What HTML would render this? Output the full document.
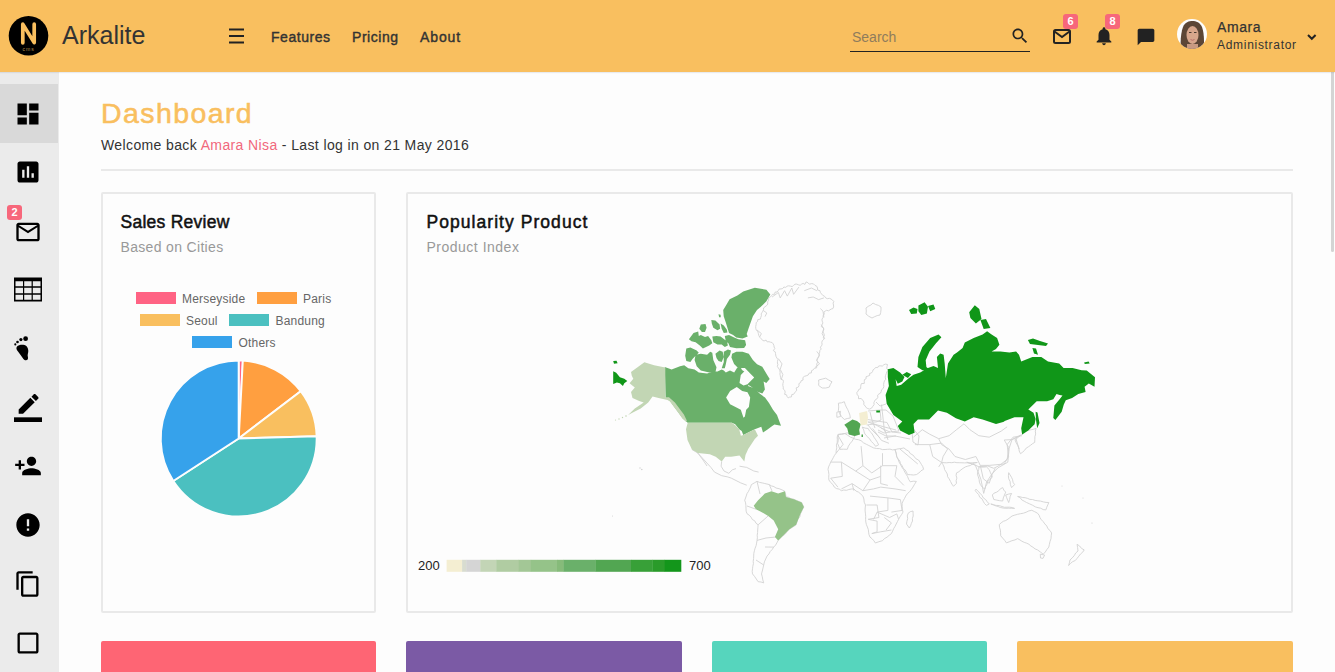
<!DOCTYPE html>
<html><head><meta charset="utf-8">
<style>
*{margin:0;padding:0;box-sizing:border-box}
html,body{width:1335px;height:672px;overflow:hidden;background:#fdfdfd;font-family:"Liberation Sans",sans-serif;color:#333}
.abs{position:absolute}
#hdr{position:absolute;left:0;top:0;width:1335px;height:72px;background:#f9bf5f;box-shadow:0 1px 1px rgba(60,80,110,0.10);z-index:2}
#side{position:absolute;left:0;top:72px;width:59px;height:600px;background:#ebebeb}
.t{position:absolute;white-space:nowrap;line-height:1}
.card{position:absolute;border:2px solid #e9e9e9;background:#fdfdfd;border-radius:2px}
.badge{position:absolute;width:15px;height:15px;background:#f7677b;color:#fff;font-weight:bold;font-size:11px;line-height:15px;text-align:center;border-radius:3px}
.ic{position:absolute;width:28px;height:28px}
.lg{position:absolute;font-size:12px;color:#666;line-height:1;white-space:nowrap;letter-spacing:0.2px}
.lb{position:absolute;width:40px;height:12px}
.sb{-webkit-text-stroke:0.4px currentColor;letter-spacing:0.55px}
</style></head><body>
<div id="hdr">
  <svg class="abs" style="left:0;top:0" width="60" height="72">
    <circle cx="28.5" cy="35.8" r="19.8" fill="#000"/>
    <path d="M22.8 42.8V24.2L34.2 42.6V24.2" fill="none" stroke="#f9bf5f" stroke-width="3.7" stroke-linecap="round" stroke-linejoin="round"/>
    <text x="28.6" y="50.6" font-size="5.2" fill="#b08a4a" text-anchor="middle" font-family="Liberation Sans" letter-spacing="0.9">cms</text>
  </svg>
  <div class="t" style="left:62px;top:23px;font-size:25px;color:#333">Arkalite</div>
  <svg class="abs" style="left:229px;top:28px" width="16" height="16"><rect x="0" y="0.5" width="15" height="2" fill="#222"/><rect x="0" y="7" width="15" height="2" fill="#222"/><rect x="0" y="13.5" width="15" height="2" fill="#222"/></svg>
  <div class="t sb" style="left:271px;top:30px;font-size:14px;color:#333">Features</div>
  <div class="t sb" style="left:352px;top:30px;font-size:14px;color:#333">Pricing</div>
  <div class="t sb" style="left:420px;top:30px;font-size:14px;color:#333;letter-spacing:0.9px">About</div>

  <div class="t" style="left:852px;top:30px;font-size:14px;color:#8f7c5c">Search</div>
  <div class="abs" style="left:850px;top:50.5px;width:180px;height:1.5px;background:#222"></div>
  <svg class="abs" style="left:1009.5px;top:26px" width="20" height="20" viewBox="0 0 24 24"><path fill="#222" d="M15.5 14h-.79l-.28-.27C15.41 12.59 16 11.11 16 9.5 16 5.91 13.090 3 9.5 3S3 5.91 3 9.5 5.91 16 9.5 16c1.61 0 3.09-.59 4.23-1.57l.27.28v.79l5 4.99L20.49 19l-4.99-5zm-6 0C7.01 14 5 11.990 5 9.5S7.01 5 9.5 5 14 7.01 14 9.5 11.99 14 9.5 14z"/></svg>

  <svg class="abs" style="left:1050px;top:26px" width="24" height="20"><rect x="4" y="4" width="16" height="13" rx="1.5" fill="none" stroke="#222" stroke-width="2"/><path d="M4.5 5.5L12 11L19.5 5.5" fill="none" stroke="#222" stroke-width="2"/></svg>
  <div class="badge" style="left:1063px;top:14px">6</div>

  <svg class="abs" style="left:1093px;top:25px" width="22" height="22" viewBox="0 0 24 24"><path fill="#222" d="M12 22c1.1 0 2-.9 2-2h-4c0 1.1.89 2 2 2zm6-6v-5c0-3.07-1.64-5.64-4.5-6.32V4c0-.83-.67-1.5-1.5-1.5s-1.5.67-1.5 1.5v.68C7.63 5.36 6 7.92 6 11v5l-2 2v1h16v-1l-2-2z"/></svg>
  <div class="badge" style="left:1105px;top:14px">8</div>

  <svg class="abs" style="left:1136px;top:26.5px" width="20" height="20" viewBox="0 0 24 24"><path fill="#222" d="M20 2H4c-1.1 0-2 .9-2 2v18l4-4h14c1.1 0 2-.9 2-2V4c0-1.1-.9-2-2-2z"/></svg>

  <svg class="abs" style="left:1176px;top:17.8px" width="32" height="32">
    <circle cx="16" cy="16" r="15" fill="#fdfdfd"/>
    <clipPath id="av"><circle cx="16" cy="16" r="15"/></clipPath>
    <g clip-path="url(#av)">
      <path d="M5 32C4 24 5 14 7 9C9 4 13 3 16.5 3C20 3 24 4.5 26 9C28 14 28.5 24 27.5 32Z" fill="#5c4636"/>
      <rect x="11" y="26" width="11" height="7" fill="#c89a82"/>
      <ellipse cx="16.5" cy="17" rx="6" ry="9" fill="#d7a68c"/>
      <path d="M13 14.5h2.5M18 14.5h2.5" stroke="#4a3a30" stroke-width="1.1"/>
      <path d="M14.5 21.5Q16.5 23 18.5 21.5" stroke="#b8706a" stroke-width="1" fill="none"/>
    </g>
  </svg>
  <div class="t" style="left:1217px;top:20px;font-size:14px;color:#333;-webkit-text-stroke:0.25px #333;letter-spacing:0.6px">Amara</div>
  <div class="t" style="left:1217px;top:38.5px;font-size:12px;color:#333;letter-spacing:0.7px">Administrator</div>
  <svg class="abs" style="left:1306px;top:33px" width="12" height="9"><path d="M2 2L5.8 5.8L9.6 2" fill="none" stroke="#222" stroke-width="2"/></svg>
</div>

<div id="side">
  <div class="abs" style="left:0;top:12px;width:58px;height:59px;background:#d9d9d9"></div>
</div>
<!-- sidebar icons (page coords) -->
<svg class="ic" style="left:14px;top:99.6px" viewBox="0 0 24 24"><path d="M3 13h8V3H3v10zm0 8h8v-6H3v6zm10 0h8V11h-8v10zm0-18v6h8V3h-8z"/></svg>
<svg class="ic" style="left:14px;top:157.7px" viewBox="0 0 24 24"><path d="M19 3H5c-1.1 0-2 .9-2 2v14c0 1.1.9 2 2 2h14c1.1 0 2-.9 2-2V5c0-1.1-.9-2-2-2zM9 17H7v-7h2v7zm4 0h-2V7h2v10zm4 0h-2v-4h2v4z"/></svg>
<svg class="ic" style="left:14px;top:217.5px" viewBox="0 0 24 24"><path d="M20 4H4c-1.1 0-1.99.9-1.99 2L2 18c0 1.1.9 2 2 2h16c1.1 0 2-.9 2-2V6c0-1.1-.9-2-2-2zm0 14H4V8l8 5 8-5v10zm-8-7L4 6h16l-8 5z" fill="none"/><path d="M20 4H4c-1.1 0-2 .9-2 2v12c0 1.1.9 2 2 2h16c1.1 0 2-.9 2-2V6c0-1.1-.9-2-2-2zm0 14H4V8l8 5 8-5v10zm0-12l-8 5-8-5z"/></svg>
<div class="badge" style="left:7px;top:205px">2</div>
<svg class="abs" style="left:14px;top:277px" width="28" height="25"><path fill="#000" fill-rule="evenodd" d="M0 0.5H28V24.5H0ZM1.5 4.2V9.3H9V4.2ZM10.2 4.2V9.3H17.6V4.2ZM18.8 4.2V9.3H26.5V4.2ZM1.5 10.8V16.2H9V10.8ZM10.2 10.8V16.2H17.6V10.8ZM18.8 10.8V16.2H26.5V10.8ZM1.5 17.7V22.7H9V17.7ZM10.2 17.7V22.7H17.6V17.7ZM18.8 17.7V22.7H26.5V17.7Z"/></svg>
<svg class="abs" style="left:10px;top:334px" width="24" height="30">
  <circle cx="15.6" cy="4.7" r="2.4"/><circle cx="10.9" cy="5.6" r="1.6"/><circle cx="7.5" cy="8" r="1.3"/><circle cx="5.3" cy="10.4" r="1.05"/>
  <path d="M7 12.5C9 10.5 14 10 16.6 12.2C18.5 14 18.7 17.5 17.8 20C17.2 22 18.6 23.6 17.8 25.3C17 26.8 14.6 26.7 13.4 25C11.6 22.5 10 20 8 17.6C6.6 16 5.8 14 7 12.5Z"/>
</svg>
<svg class="ic" style="left:13.7px;top:394px" viewBox="0 0 24 24"><path d="M17.75 7L14 3.25l-10 10V17h3.75l10-10zm2.96-2.96c.39-.39.39-1.02 0-1.41L18.37.29c-.39-.39-1.02-.39-1.41 0L15 2.25 18.75 6l1.96-1.96z"/><path d="M0 20h24v4H0z"/></svg>
<svg class="ic" style="left:13.5px;top:452px" viewBox="0 0 24 24"><path d="M15 12c2.21 0 4-1.79 4-4s-1.79-4-4-4-4 1.79-4 4 1.79 4 4 4zm-9-2V7H4v3H1v2h3v3h2v-3h3v-2H6zm9 4c-2.67 0-8 1.340-8 4v2h16v-2c0-2.66-5.33-4-8-4z"/></svg>
<svg class="ic" style="left:14px;top:511px" viewBox="0 0 24 24"><path d="M12 2C6.48 2 2 6.48 2 12s4.48 10 10 10 10-4.48 10-10S17.52 2 12 2zm1 15h-2v-2h2v2zm0-4h-2V7h2v6z"/></svg>
<svg class="ic" style="left:13.7px;top:570px" viewBox="0 0 24 24"><path d="M16 1H4c-1.1 0-2 .9-2 2v14h2V3h12V1zm3 4H8c-1.1 0-2 .9-2 2v14c0 1.1.9 2 2 2h11c1.1 0 2-.9 2-2V7c0-1.1-.9-2-2-2zm0 16H8V7h11v14z"/></svg>
<svg class="ic" style="left:13.8px;top:629.3px" viewBox="0 0 24 24"><path d="M19 5v14H5V5h14m0-2H5c-1.1 0-2 .9-2 2v14c0 1.1.9 2 2 2h14c1.1 0 2-.9 2-2V5c0-1.1-.9-2-2-2z"/></svg>

<div class="t" style="left:101px;top:99px;font-size:28.5px;color:#f9bf5f;-webkit-text-stroke:0.55px #f9bf5f;letter-spacing:1.4px">Dashboard</div>
<div class="t" style="left:101px;top:138px;font-size:14px;color:#333;letter-spacing:0.38px">Welcome back <span style="color:#f1687c">Amara Nisa</span> - Last log in on 21 May 2016</div>
<div class="abs" style="left:101px;top:169px;width:1192px;height:2px;background:#e9e9e9"></div>

<div class="card" style="left:101px;top:192px;width:275px;height:421px"></div>
<div class="card" style="left:406px;top:192px;width:887px;height:421px"></div>

<div class="t" style="left:120.5px;top:214px;font-size:17.5px;color:#111;-webkit-text-stroke:0.5px #111;letter-spacing:0.26px">Sales Review</div>
<div class="t" style="left:120.5px;top:240px;font-size:14px;color:#999;letter-spacing:0.33px">Based on Cities</div>
<div class="t" style="left:426.5px;top:214px;font-size:17.5px;color:#111;-webkit-text-stroke:0.5px #111;letter-spacing:1.05px">Popularity Product</div>
<div class="t" style="left:426.5px;top:240px;font-size:14px;color:#999;letter-spacing:0.5px">Product Index</div>

<!-- legend -->
<div class="lb" style="left:135.5px;top:292px;background:#ff6384"></div><div class="lg" style="left:182px;top:293px">Merseyside</div>
<div class="lb" style="left:256.5px;top:292px;background:#ff9f40"></div><div class="lg" style="left:303px;top:293px">Paris</div>
<div class="lb" style="left:140px;top:314px;background:#f9bf5f"></div><div class="lg" style="left:186px;top:315px">Seoul</div>
<div class="lb" style="left:229px;top:314px;background:#4bc0c0"></div><div class="lg" style="left:275.5px;top:315px">Bandung</div>
<div class="lb" style="left:192px;top:336px;background:#36a2eb"></div><div class="lg" style="left:238.5px;top:337px">Others</div>

<svg class="abs" style="left:0;top:0" width="400" height="600">
<path d="M238.7 438.5L238.70 360.50A78 78 0 0 1 242.78 360.61Z" fill="#ff6384" stroke="#fdfdfd" stroke-width="1.6"/>
<path d="M238.7 438.5L242.78 360.61A78 78 0 0 1 300.75 391.23Z" fill="#ff9f40" stroke="#fdfdfd" stroke-width="2"/>
<path d="M238.7 438.5L300.75 391.23A78 78 0 0 1 316.67 436.32Z" fill="#f9bf5f" stroke="#fdfdfd" stroke-width="2"/>
<path d="M238.7 438.5L316.67 436.32A78 78 0 0 1 173.28 480.98Z" fill="#4bc0c0" stroke="#fdfdfd" stroke-width="2"/>
<path d="M238.7 438.5L173.28 480.98A78 78 0 0 1 238.70 360.50Z" fill="#36a2eb" stroke="#fdfdfd" stroke-width="2"/>
</svg>

<!-- MAP -->
<svg id="map" class="abs" style="left:0;top:0" width="1335" height="672">
<g fill="none" stroke="#d2d2d2" stroke-width="0.9" stroke-linejoin="round">
<path d="M770.4 297.0 L771.5 295.7 L772.6 294.3 L774.6 294.3 L775.1 292.1 L777.1 292.0 L778.2 290.7 L779.1 289.1 L781.1 288.9 L782.7 288.5 L783.9 287.0 L785.7 287.4 L787.1 286.2 L788.6 285.8 L790.4 286.1 L792.2 286.6 L793.6 285.4 L795.0 284.2 L796.7 284.1 L798.4 284.8 L800.2 285.3 L801.6 284.1 L803.1 283.4 L804.9 284.4 L806.1 281.9 L807.9 282.7 L809.4 284.2 L811.6 283.6 L813.5 283.9 L815.0 285.4 L816.8 286.3 L817.5 288.0 L817.6 290.1 L819.9 290.6 L820.4 292.5 L821.6 294.0 L822.8 295.4 L824.6 296.3 L825.7 297.9 L827.3 298.7 L829.4 298.3 L831.0 299.0 L832.5 300.1 L833.8 301.4 L833.1 303.1 L833.5 305.0 L833.6 306.9 L832.9 308.6 L831.3 309.0 L829.9 309.9 L828.6 310.8 L826.6 310.3 L825.2 311.1 L823.9 312.1 L824.3 314.0 L823.2 315.6 L823.1 317.4 L822.0 319.1 L822.1 321.0 L822.9 322.9 L822.1 324.6 L821.3 326.6 L823.7 328.0 L823.4 330.0 L822.9 331.9 L823.9 333.6 L824.4 335.5 L823.3 337.2 L824.1 339.1 L822.3 340.7 L821.8 342.4 L822.1 344.3 L821.5 345.8 L820.4 347.2 L821.2 349.1 L819.9 350.4 L819.7 352.1 L819.3 353.6 L819.1 355.3 L818.6 356.8 L817.4 358.4 L816.8 360.1 L817.6 362.2 L816.8 363.8 L816.8 365.7 L816.6 367.8 L814.3 368.3 L813.3 369.8 L811.5 370.7 L811.4 372.9 L809.3 373.1 L808.1 375.1 L806.2 375.8 L804.3 376.4 L802.9 377.6 L803.1 380.0 L801.1 380.8 L800.6 382.6 L798.9 383.6 L799.0 385.5 L798.3 387.1 L796.1 387.9 L796.7 390.1 L795.7 391.5 L794.6 392.9 L793.6 394.3 L791.8 394.5 L791.5 396.9 L789.6 397.1 L788.2 397.9 L787.1 396.6 L786.5 394.8 L784.6 394.3 L785.1 392.4 L784.9 390.6 L783.2 389.0 L783.3 387.2 L782.8 385.4 L782.9 383.6 L783.4 381.8 L783.2 380.2 L780.9 379.0 L780.5 377.4 L780.3 375.8 L779.9 374.2 L780.1 372.5 L779.9 370.8 L779.3 369.3 L778.3 367.9 L777.3 366.4 L777.9 364.6 L777.4 363.0 L777.5 361.3 L778.0 359.5 L776.9 358.1 L776.1 356.6 L775.7 355.0 L775.5 353.4 L775.2 351.8 L773.3 350.6 L774.8 348.5 L774.1 347.0 L773.9 345.4 L773.2 343.9 L772.1 342.5 L770.5 342.2 L769.0 341.7 L767.2 341.9 L766.1 340.1 L764.1 340.9 L762.6 340.4 L761.4 338.9 L759.9 337.4 L758.9 335.7 L758.4 333.7 L757.9 331.8 L756.4 330.3 L755.8 328.5 L755.7 326.6 L756.1 324.6 L756.2 322.6 L757.6 321.5 L757.8 319.6 L760.4 319.1 L760.8 317.3 L761.4 315.7 L761.2 313.9 L762.0 312.5 L762.9 311.1 L763.5 309.6 L763.6 307.9 L765.0 306.8 L766.6 305.6 L767.8 304.1 L767.6 301.9 L768.6 300.2 L768.6 298.2Z"/>
<path d="M857.0 394.2 L856.9 392.3 L858.1 391.1 L858.7 389.5 L860.7 388.6 L860.7 386.8 L860.9 385.0 L861.5 383.5 L864.3 383.4 L864.3 381.5 L864.4 379.6 L866.1 378.8 L866.0 376.8 L867.9 376.1 L869.7 375.4 L869.6 373.4 L871.4 373.0 L872.5 371.6 L873.1 369.8 L874.5 368.9 L875.5 367.5 L877.7 367.6 L878.6 366.0 L880.4 365.8 L882.3 366.1 L883.9 364.7 L885.6 364.1 L887.5 364.5 L887.0 366.6 L886.8 368.6 L888.2 370.4 L886.8 371.8 L886.3 373.6 L885.6 375.3 L885.2 377.1 L885.7 379.3 L884.5 380.8 L883.9 382.6 L883.6 384.5 L883.8 386.6 L883.2 388.4 L881.5 389.8 L881.2 391.5 L880.6 393.0 L878.9 394.0 L877.6 395.2 L877.9 397.3 L877.1 398.7 L875.4 399.7 L874.6 401.1 L873.9 402.6 L874.1 404.6 L872.8 406.3 L871.6 408.1 L869.6 409.1 L867.8 408.6 L866.3 407.7 L865.2 406.1 L863.8 404.4 L863.9 402.1 L862.9 400.2 L861.0 398.5 L858.5 398.7 L858.5 396.2Z"/>
<path d="M818.6 380.0 L822.1 379.1 L825.7 378.2 L828.8 380.1 L832.0 381.8 L830.4 384.3 L829.3 387.1 L825.8 388.0 L822.1 388.0 L818.6 385.4 L818.8 382.7Z"/>
<path d="M838.4 403.2 L841.5 402.8 L844.3 401.7 L845.2 404.4 L846.3 407.0 L847.7 409.5 L848.8 412.1 L849.9 415.0 L850.3 418.0 L847.2 418.5 L844.3 419.5 L841.4 416.5 L839.8 413.6 L838.4 410.6 L838.7 406.9Z"/>
<path d="M836.9 412.1 L840.6 411.3 L840.1 413.9 L840.6 416.5 L836.9 417.3 L836.8 414.7Z"/>
<path d="M866.0 308.0 L868.3 306.3 L870.9 305.0 L873.0 303.0 L875.6 304.5 L878.5 305.4 L881.0 307.0 L881.0 309.7 L880.7 312.4 L880.0 315.0 L877.2 315.6 L874.6 316.7 L872.0 318.0 L868.8 316.3 L866.0 314.0 L866.3 311.0Z"/>
<path d="M838.4 434.4 L841.4 434.4 L844.4 433.6 L847.3 432.9 L849.9 433.8 L852.3 434.9 L854.8 435.9 L853.6 438.6 L852.2 441.1 L850.3 443.3 L848.4 446.1 L847.3 449.3 L843.6 449.2 L839.9 449.3 L838.8 446.3 L837.6 443.3 L838.3 440.4 L838.1 437.4Z"/>
<path d="M862.2 427.0 L865.1 428.1 L868.2 428.5 L869.4 430.9 L871.4 432.8 L872.8 435.0 L874.1 437.4 L875.8 439.8 L877.3 442.2 L878.6 444.8 L875.6 446.3 L873.7 443.8 L871.4 441.5 L869.6 438.9 L867.8 437.0 L865.9 435.2 L864.4 433.0 L863.7 429.9Z"/>
<path d="M837.9 434.5 L841.4 433.9 L845.0 433.6 L847.7 435.3 L850.4 437.1 L853.0 438.1 L855.6 439.3 L858.5 439.7 L861.1 440.7 L863.5 442.8 L866.4 444.3 L868.8 445.5 L871.2 446.7 L873.6 447.9 L876.6 448.5 L879.6 448.6 L882.5 449.6 L885.0 449.5 L887.5 449.3 L890.0 449.1 L892.5 449.9 L895.0 449.6 L896.2 453.1 L896.8 456.8 L898.1 459.5 L899.2 462.2 L900.7 464.9 L902.1 467.5 L903.6 469.6 L904.8 472.0 L906.1 474.2 L907.5 476.4 L908.6 479.2 L910.2 481.8 L913.3 481.2 L916.4 481.4 L914.6 484.2 L912.9 487.1 L911.3 489.5 L909.5 491.7 L907.3 493.7 L905.7 496.1 L904.5 498.5 L903.2 500.8 L902.1 503.2 L902.1 506.2 L902.3 509.2 L903.0 512.1 L901.6 514.5 L900.0 516.8 L898.6 519.3 L897.4 521.7 L896.2 524.0 L895.0 526.4 L893.6 528.7 L892.6 531.2 L891.4 533.6 L889.2 535.3 L887.0 537.2 L884.4 538.6 L882.5 540.7 L878.9 541.7 L875.4 543.0 L873.9 540.8 L872.1 538.8 L870.0 537.1 L869.0 534.7 L868.6 532.1 L868.3 529.5 L867.4 527.0 L866.4 524.6 L865.8 522.0 L865.6 519.3 L865.7 516.6 L865.5 513.9 L865.1 510.9 L865.2 508.0 L865.5 505.0 L864.2 502.2 L863.9 499.0 L862.9 496.1 L860.8 494.1 L858.6 492.2 L855.9 491.0 L853.9 488.9 L851.4 489.0 L848.9 489.5 L846.5 490.3 L843.8 490.0 L841.4 490.7 L839.2 489.1 L836.5 488.6 L834.3 487.1 L832.9 484.5 L830.6 482.4 L828.9 480.0 L828.7 477.3 L828.9 474.6 L828.6 471.9 L828.0 469.3 L828.6 466.8 L829.7 464.5 L830.7 462.1 L832.1 459.9 L833.3 457.6 L834.5 455.3 L836.1 453.2 L836.2 450.5 L836.8 447.9 L836.4 445.1 L837.2 442.5 L837.3 439.8 L837.2 437.1Z"/>
<path d="M895.0 449.6 L897.9 448.9 L901.0 448.6 L903.9 447.9 L906.1 449.7 L908.7 451.1 L910.3 453.6 L912.9 455.0 L914.5 457.0 L916.1 458.9 L918.5 460.0 L920.0 462.1 L921.4 464.4 L922.8 466.7 L923.6 469.3 L921.0 470.8 L918.9 473.0 L916.4 474.6 L913.4 475.0 L910.5 474.7 L907.5 474.6 L906.5 472.2 L905.1 470.0 L903.2 468.1 L902.1 465.7 L900.5 463.7 L899.8 461.0 L898.2 459.0 L896.8 456.8 L896.1 453.2Z"/>
<path d="M941.6 462.5 L943.0 464.7 L944.1 467.0 L944.6 469.6 L946.0 471.8 L947.3 474.0 L947.6 476.7 L949.1 478.8 L950.5 481.4 L951.8 484.0 L953.5 486.3 L956.5 483.3 L956.1 480.7 L956.9 478.1 L956.1 475.5 L956.5 472.9 L958.9 471.7 L960.9 469.9 L963.1 468.3 L965.4 466.9 L967.8 466.1 L970.3 465.5 L972.5 464.0 L974.8 463.0 L977.3 462.5 L974.8 462.5 L972.2 462.8 L969.6 462.9 L967.1 462.8 L964.5 462.9 L962.0 462.8 L959.5 462.7 L956.9 462.7 L954.4 462.2 L951.8 462.7 L949.2 462.5 L946.7 462.8 L944.1 462.7Z"/>
<path d="M908.1 513.3 L910.3 511.7 L913.0 511.0 L913.1 513.5 L913.2 516.0 L912.4 518.5 L912.5 521.0 L911.4 523.3 L910.6 525.8 L909.3 528.0 L906.5 524.0 L906.9 521.3 L907.7 518.7 L907.3 515.9Z"/>
<path d="M1014.9 439.6 L1017.4 438.2 L1019.4 436.1 L1021.7 434.5 L1024.1 433.1 L1026.2 431.1 L1028.6 430.3 L1031.2 429.7 L1033.7 429.2 L1036.1 428.3 L1035.3 431.1 L1035.7 434.0 L1034.9 436.7 L1034.8 439.6 L1034.7 442.4 L1032.5 443.7 L1030.5 445.3 L1028.4 446.8 L1026.2 448.1 L1024.6 450.3 L1022.7 452.1 L1020.5 453.7 L1019.2 451.0 L1018.9 448.0 L1017.7 445.3 L1016.1 442.6Z"/>
<path d="M999.3 524.5 L1001.2 522.8 L1003.3 521.3 L1005.8 520.5 L1008.0 519.1 L1010.0 517.6 L1012.0 516.0 L1014.8 515.1 L1017.6 514.3 L1020.5 513.7 L1023.4 513.2 L1026.2 512.2 L1028.9 510.9 L1031.8 510.3 L1034.7 511.7 L1037.5 513.2 L1039.1 515.2 L1040.0 517.7 L1041.4 519.8 L1043.2 521.6 L1044.8 523.9 L1046.8 526.0 L1047.9 528.7 L1050.1 530.6 L1051.6 533.0 L1051.2 535.8 L1051.0 538.7 L1050.0 541.5 L1049.4 544.3 L1048.8 547.1 L1046.9 549.5 L1045.3 552.0 L1043.2 554.2 L1040.4 552.0 L1037.5 549.9 L1035.1 548.9 L1033.1 547.3 L1030.9 546.0 L1029.0 544.3 L1026.7 543.2 L1024.3 542.4 L1022.0 541.3 L1019.9 539.9 L1017.7 538.6 L1015.0 539.9 L1012.0 540.7 L1009.2 541.8 L1006.4 542.9 L1004.7 540.4 L1002.7 538.1 L1000.7 535.8 L1000.6 532.9 L1000.4 530.1 L999.5 527.3Z"/>
<path d="M1040.3 554.2 L1044.6 555.0 L1043.0 558.4 L1040.5 558.0Z"/>
<path d="M1077.1 544.3 L1079.6 546.0 L1081.5 548.4 L1084.2 549.9 L1082.7 552.2 L1080.5 554.0 L1078.8 556.2 L1077.1 558.4 L1075.3 560.5 L1072.6 561.7 L1070.5 563.4 L1068.6 565.5 L1069.4 562.8 L1070.0 560.0 L1072.2 557.9 L1074.2 555.7 L1075.7 553.0 L1078.0 551.0 L1077.6 547.6Z"/>
<path d="M744.7 500.3 L745.9 497.0 L747.0 493.6 L748.4 491.5 L749.5 489.2 L750.6 487.0 L751.4 484.6 L754.2 483.0 L757.0 481.3 L759.5 482.4 L762.2 482.9 L764.8 483.5 L769.3 484.6 L771.4 485.9 L773.9 486.6 L776.0 488.0 L779.1 488.7 L782.1 489.9 L784.9 491.3 L785.6 494.1 L786.0 496.9 L788.7 497.3 L791.1 498.8 L793.8 499.2 L796.4 500.4 L799.0 501.5 L801.7 502.5 L802.7 504.8 L803.9 507.0 L802.6 509.2 L801.6 511.5 L800.5 513.7 L799.9 516.7 L798.0 519.1 L797.0 521.9 L796.1 524.8 L793.9 526.3 L791.6 527.8 L789.4 529.3 L787.1 531.4 L785.2 534.1 L782.7 536.0 L780.3 538.0 L778.2 540.4 L776.9 542.8 L775.6 545.1 L773.7 547.1 L772.2 549.5 L770.2 551.5 L768.9 554.0 L767.0 556.1 L765.7 559.0 L764.4 561.9 L763.7 565.0 L763.0 568.0 L762.3 571.0 L761.5 573.9 L762.3 576.9 L762.8 579.9 L763.7 582.9 L761.0 582.0 L758.1 581.7 L756.3 579.0 L754.5 576.4 L752.5 573.9 L752.2 571.3 L752.5 568.8 L752.8 566.3 L753.4 563.7 L753.2 561.2 L753.6 558.6 L753.7 556.1 L753.8 553.4 L754.4 550.8 L755.1 548.2 L756.1 545.7 L756.6 543.1 L757.0 540.4 L757.4 537.8 L757.2 535.2 L757.6 532.6 L757.7 530.0 L757.9 527.4 L758.1 524.8 L756.0 523.2 L754.7 520.8 L752.3 519.5 L751.0 517.1 L749.2 515.2 L747.0 513.7 L746.1 511.1 L746.0 508.3 L745.9 505.6 L745.6 502.9Z"/>
<path d="M976.0 489.1 L977.9 491.2 L980.0 493.2 L981.9 495.3 L983.3 497.9 L985.7 499.6 L987.3 501.9 L989.3 504.0 L986.4 505.4 L984.5 503.5 L983.2 501.2 L982.0 498.8 L979.7 497.2 L978.7 494.6 L976.8 492.7 L975.2 490.6Z"/>
<path d="M990.8 504.0 L993.5 505.0 L996.4 505.4 L999.3 505.6 L1002.0 506.5 L1004.5 507.3 L1007.0 507.2 L1009.6 507.2 L1012.2 507.5 L1014.6 508.4 L1011.7 508.3 L1008.8 508.2 L1005.9 508.3 L1003.0 508.0 L1000.4 507.5 L998.1 506.5 L995.6 505.8 L993.3 504.5Z"/>
<path d="M992.3 495.0 L994.1 493.1 L996.6 492.2 L998.7 490.8 L1000.4 488.8 L1002.7 487.6 L1003.8 490.1 L1005.7 492.1 L1004.5 495.0 L1003.3 497.9 L1002.7 501.0 L999.7 500.7 L996.7 500.1 L993.8 499.5Z"/>
<path d="M1005.7 495.0 L1008.6 494.1 L1011.6 493.5 L1010.2 496.3 L1009.6 499.5 L1008.7 502.5 L1007.6 500.1 L1006.6 497.5Z"/>
<path d="M1008.7 472.7 L1010.1 475.0 L1011.5 477.3 L1012.6 479.7 L1013.1 482.4 L1014.6 484.6 L1011.6 487.6 L1010.4 484.7 L1010.1 481.5 L1008.7 478.7 L1008.4 475.7Z"/>
<path d="M1017.6 496.5 L1020.1 496.8 L1022.6 497.5 L1025.1 497.7 L1027.6 498.4 L1029.9 499.4 L1032.5 499.5 L1035.1 500.4 L1037.9 500.8 L1040.6 501.1 L1043.3 501.9 L1046.0 502.4 L1048.8 502.5 L1047.8 504.9 L1046.7 507.4 L1045.9 509.9 L1043.2 509.6 L1040.7 508.2 L1038.0 507.7 L1035.4 506.9 L1032.5 505.2 L1029.5 503.8 L1026.5 502.5 L1024.2 501.2 L1021.8 499.9 L1020.1 497.6Z"/>
<path d="M978.9 466.8 L978.8 469.3 L977.9 471.7 L977.4 474.2 L978.3 476.8 L979.1 479.3 L979.4 482.1 L980.4 484.6 L982.3 487.2 L984.9 489.1 L985.6 486.5 L987.0 484.2 L987.8 481.6 L989.9 479.3 L992.3 477.2 L991.4 474.7 L990.2 472.2 L989.3 469.7 L986.4 466.8 L983.9 467.1 L981.4 467.1Z"/>
<path d="M691.9 449.5 L697.9 453.1 L710.9 467.4 L714.5 472.1 L721.7 475.7 L727.6 476.9 L731.2 478.1 L736.0 480.5 L740.7 482.9 L746.7 485.2"/>
<path d="M721.7 461.4 L721.1 466.2 L724.0 471.0 L728.8 473.3 L732.4 469.8 L736.0 468.6"/>
<path d="M697.0 452.0 L703.0 460.0 L707.0 466.0"/>
<path d="M739.5 466.2 L746.7 467.4 L753.8 471.0 L758.6 472.1"/>
<path d="M966.8 462.2 L975.3 465.1 L978.9 466.8 L987.8 466.0 L993.8 468.3 L999.7 465.3 L1007.2 459.3 L1008.7 447.4 L1004.2 440.0 L1012.0 439.6 L1020.5 435.4"/>
<path d="M966.8 462.2 L975.3 465.1 L980.9 479.2 L983.7 493.4 L986.6 482.0 L992.2 473.6 L997.9 467.9 L1007.8 462.2 L1009.2 448.1 L1012.0 439.6 L1020.5 435.4"/>
<path d="M837.9 435.4 L843.2 444.3 L836.1 453.2"/>
<path d="M830.7 462.1 L841.4 462.1"/>
<path d="M841.4 462.1 L842.3 476.4 L830.7 478.2"/>
<path d="M841.4 462.1 L855.7 471.1 L862.9 465.7 L861.1 446.1"/>
<path d="M862.9 465.7 L871.8 472.9 L882.5 465.7 L882.5 453.2"/>
<path d="M882.5 465.7 L896.8 465.7"/>
<path d="M855.7 471.1 L870.0 480.0 L880.7 476.4 L880.7 465.7"/>
<path d="M880.7 476.4 L880.7 483.6 L887.9 485.4"/>
<path d="M896.8 465.7 L895.0 476.4 L903.9 485.4"/>
<path d="M841.4 488.9 L852.1 483.6 L862.9 490.7 L870.0 480.0"/>
<path d="M862.9 490.7 L873.6 488.9 L880.7 487.1 L895.0 488.9 L905.7 490.7"/>
<path d="M870.0 496.1 L887.9 497.9 L887.9 510.4 L877.1 512.1 L873.6 519.3"/>
<path d="M866.4 505.0 L877.1 505.0 L878.9 517.5 L868.2 519.3"/>
<path d="M887.9 497.9 L900.4 499.6 L902.1 510.4 L891.4 512.1"/>
<path d="M877.1 512.1 L889.6 517.5 L896.8 513.9 L898.6 519.3"/>
<path d="M868.2 519.3 L877.1 521.1 L877.1 531.8 L871.8 533.6"/>
<path d="M871.8 533.6 L880.7 531.8 L891.4 530.0"/>
<path d="M884.3 517.5 L891.4 522.9 L886.1 530.0"/>
<path d="M852.1 483.6 L853.9 490.7"/>
<path d="M830.7 478.2 L837.9 487.1"/>
<path d="M913.4 437.2 L922.3 429.7 L929.7 434.2 L938.7 438.7 L949.1 435.7 L956.5 429.7 L964.0 423.8"/>
<path d="M964.0 423.8 L969.9 429.7 L978.8 435.7 L989.2 437.2 L1001.1 431.2 L1007.1 426.8"/>
<path d="M938.7 438.7 L941.6 444.6 L949.1 449.1 L955.0 456.5 L965.4 459.5 L975.9 456.5 L980.3 465.4 L989.2 465.4 L1004.1 464.0 L1008.6 456.5 L1007.1 444.6 L1013.0 437.2 L1022.0 435.7"/>
<path d="M912.0 427.0 L919.0 436.0 L918.0 445.0 L913.0 442.0 L912.0 432.0"/>
<path d="M914.9 444.6 L929.7 444.6 L932.7 456.5 L941.6 462.5 L938.7 466.9"/>
<path d="M929.7 444.6 L941.6 443.1 L947.6 449.1 L943.1 456.5 L941.6 462.5"/>
<path d="M980.3 465.4 L983.3 478.8 L989.2 483.3 L992.2 474.4 L995.2 468.4"/>
<path d="M1016.0 438.7 L1019.0 449.1"/>
<path d="M900.0 449.1 L908.9 456.5 L917.8 464.0"/>
<path d="M867.5 419.5 L877.0 421.0 L887.0 422.5"/>
<path d="M881.5 404.6 L884.5 431.5"/>
<path d="M866.7 425.0 L874.0 424.0 L884.5 427.0 L896.0 430.0"/>
<path d="M872.6 428.5 L881.5 440.4 L889.0 443.3"/>
<path d="M870.0 412.0 L872.0 420.0 L875.0 428.0"/>
<path d="M887.0 422.5 L892.0 432.0 L901.0 433.0"/>
<path d="M878.0 432.0 L886.0 436.0 L896.0 436.0"/>
<path d="M757.0 481.3 L760.0 494.0"/>
<path d="M769.3 484.6 L772.0 491.0"/>
<path d="M755.9 509.2 L747.0 506.0"/>
<path d="M768.2 515.9 L758.1 524.8"/>
<path d="M774.9 537.1 L766.0 538.0 L757.0 540.4"/>
<path d="M773.7 547.1 L765.0 547.0"/>
<path d="M763.7 565.0 L756.0 560.0"/>
<path d="M868.0 411.0 L880.0 410.0 L881.0 420.0 L876.0 422.0 L868.0 422.0"/>
<path d="M880.0 410.0 L886.0 410.0 L893.0 416.0 L897.0 426.0 L899.0 431.0 L890.0 432.0 L881.0 428.0"/>
<path d="M868.0 422.0 L876.0 425.0 L885.0 430.0 L888.0 440.0"/>
<path d="M868.0 425.0 L872.0 430.0 L880.0 438.0"/>
<path d="M884.0 438.0 L895.0 436.0 L910.0 439.0"/>
<path d="M876.0 402.0 L880.0 406.0 L886.0 404.0"/>
<path d="M878.0 430.0 L884.0 433.0 L890.0 432.0"/>
<path d="M772.1 297.0 L778.4 292.5 L780.2 297.9 L784.6 290.7 L787.3 296.1 L791.8 288.0 L793.6 294.3 L798.9 287.1"/>
<path d="M804.3 290.7 L811.4 288.0 L816.8 290.7"/>
<path d="M807.9 297.9 L813.2 297.0 L818.6 299.6 L823.9 297.9"/>
<path d="M820.4 308.6 L823.0 311.2 L823.9 317.5"/>
<path d="M821.2 324.6 L823.9 329.1 L822.1 333.6 L824.8 338.9"/>
<path d="M816.8 351.4 L819.5 355.0 L816.8 360.4 L819.5 363.9 L815.0 367.5"/>
<path d="M778.4 358.6 L782.0 363.9 L780.2 369.3 L782.9 374.6 L781.1 380.0"/>
<path d="M757.0 330.0 L761.4 333.6 L759.6 337.1"/>
<path d="M763.2 310.4 L766.8 313.0 L765.0 316.6"/>
</g>
<g fill="#c2d6b4"><circle cx="626" cy="416" r="0.8"/><circle cx="622.5" cy="417.5" r="0.7"/><circle cx="619" cy="419" r="0.7"/><circle cx="615.5" cy="420" r="0.6"/></g>
<g fill="#d0d0d0"><circle cx="640" cy="468" r="0.7"/><circle cx="641.8" cy="469.5" r="0.8"/><circle cx="612.5" cy="516" r="0.5"/><circle cx="1092" cy="523" r="0.6"/><circle cx="1083" cy="498" r="0.5"/><circle cx="1062" cy="486" r="0.5"/></g>
<path fill="#6ab06a" d="M664.8 367.1 L671.6 369.4 L680.0 366.3 L684.2 365.2 L688.3 368.3 L694.6 369.4 L698.8 372.5 L707.1 373.5 L713.3 371.5 L717.5 371.5 L721.7 369.4 L723.8 370.4 L725.8 372.5 L730.0 370.4 L734.2 372.5 L737.0 368.0 L740.0 366.0 L742.0 370.0 L745.0 372.0 L752.0 378.0 L748.0 386.0 L754.2 388.2 L759.6 393.6 L765.0 397.6 L769.0 403.0 L773.0 409.7 L777.0 415.0 L781.0 425.8 L774.4 424.4 L771.2 426.8 L767.9 429.3 L763.0 432.6 L761.3 426.8 L754.8 429.3 L748.2 432.6 L743.3 435.0 L741.7 431.0 L739.2 429.3 L735.2 424.2 L731.9 422.7 L687.7 422.7 L686.1 421.5 L682.4 418.0 L678.5 412.5 L674.0 406.5 L670.0 401.0 L665.6 397.4Z"/>
<path fill="#fdfdfd" d="M726.1 397.6 L730.1 390.9 L736.8 386.9 L742.2 390.9 L747.5 392.3 L750.2 397.6 L748.9 407.0 L746.2 409.7 L744.9 416.4 L743.5 417.7 L740.8 409.7 L735.5 407.0 L730.1 404.3Z M740.8 374.9 L744.9 370.8 L750.2 374.9 L754.2 377.5 L751.6 382.9 L747.5 384.2 L743.5 385.6 L739.5 382.9Z"/>
<path fill="#6ab06a" d="M743.2 291.6 L754.8 287.7 L766.4 289.7 L770.3 294.5 L766.4 301.3 L760.6 307.1 L757.0 310.0 L752.9 316.3 L748.8 327.7 L746.7 334.0 L747.7 336.6 L742.5 338.6 L736.3 337.6 L733.1 335.0 L729.0 332.9 L727.4 327.7 L725.8 322.5 L723.7 316.3 L723.2 310.0 L726.7 304.2 L729.6 299.3 L737.4 295.5Z M724.8 336.0 L729.0 335.0 L734.2 337.6 L738.3 339.2 L745.1 340.2 L746.1 344.9 L744.1 348.0 L736.3 348.3 L730.0 346.9 L728.4 343.3 L725.8 341.3Z M711.3 319.9 L715.4 320.4 L719.6 324.6 L720.1 328.8 L717.5 330.3 L713.3 327.7 L711.8 323.5Z M720.6 323.5 L723.8 325.6 L726.9 329.8 L727.4 332.4 L723.8 332.9 L721.7 328.8Z M700.8 324.6 L705.5 324.1 L706.6 327.7 L705.0 331.9 L701.9 331.9 L699.3 328.8Z M718.5 314.2 L720.6 314.7 L720.8 317.3 L719.1 317.3Z M730.0 330.8 L732.6 331.9 L732.1 334.5 L730.0 333.4Z M688.9 339.2 L693.5 332.9 L698.2 331.4 L698.8 336.0 L700.8 335.0 L705.0 337.1 L708.1 336.0 L711.3 340.2 L712.3 343.3 L709.2 345.4 L702.9 348.5 L699.8 345.4 L695.6 342.3 L691.5 341.3Z M712.3 336.6 L716.5 336.0 L720.6 336.6 L724.8 339.7 L726.9 341.3 L727.9 345.4 L724.8 347.0 L721.7 344.4 L717.5 344.4 L713.3 342.3Z M686.3 348.5 L690.4 347.5 L696.7 350.6 L698.8 352.7 L695.6 355.8 L692.5 359.0 L690.4 362.1 L686.3 361.0 L685.2 355.8Z M695.6 354.8 L700.8 353.8 L707.1 354.8 L710.2 351.7 L712.3 352.7 L713.3 360.0 L716.5 367.3 L715.4 372.5 L709.2 372.5 L700.8 370.4 L696.7 366.3 L694.6 360.0Z M715.4 353.8 L719.6 350.6 L722.7 351.7 L723.8 356.9 L721.7 362.1 L718.5 361.0 L716.5 357.9Z M723.8 351.7 L727.9 349.6 L731.0 350.6 L730.0 354.8 L726.9 359.0 L725.8 364.2 L724.8 368.3 L721.7 368.3 L723.8 362.1Z M732.1 353.8 L736.3 351.7 L742.5 351.7 L748.8 353.8 L752.9 360.0 L757.1 364.2 L762.3 366.8 L766.3 373.5 L769.7 378.9 L766.3 382.9 L763.6 381.6 L764.9 389.6 L762.3 393.6 L755.6 390.9 L751.6 386.9 L747.5 384.2 L754.2 377.5 L750.2 373.5 L744.9 368.1 L738.1 368.1 L734.1 364.1 L731.4 357.4Z"/>
<path fill="#c2d6b4" d="M687.7 422.7 L731.9 422.7 L735.2 425.2 L739.2 429.3 L740.9 435.8 L743.3 435.0 L748.2 432.6 L754.8 429.3 L758.0 435.8 L754.8 439.1 L751.5 444.0 L748.2 448.9 L745.5 455.0 L744.3 461.4 L739.5 455.5 L731.2 456.7 L725.2 456.7 L721.7 461.4 L715.7 456.7 L709.8 454.3 L697.9 453.1 L691.9 449.5 L687.5 440.0 L686.0 429.3Z M631.0 372.0 L644.4 362.3 L654.1 365.3 L665.3 367.5 L665.3 397.3 L669.0 397.3 L674.9 402.5 L679.4 408.5 L683.9 414.4 L686.8 420.4 L686.1 421.8 L682.4 418.5 L678.5 413.0 L674.0 407.0 L670.0 401.5 L667.5 400.0 L658.6 398.0 L652.6 396.5 L648.2 402.5 L640.7 408.5 L634.8 411.4 L628.1 415.1 L634.8 408.5 L643.7 402.5 L639.2 401.0 L632.5 398.0 L631.0 392.1 L634.8 387.6 L629.6 383.2 L633.3 378.7 L631.8 375.7Z"/>
<path fill="#95c389" d="M753.7 505.8 L758.1 500.3 L764.8 493.6 L771.5 491.3 L778.2 493.6 L784.9 491.3 L786.0 496.9 L793.8 499.2 L801.7 502.5 L803.9 507.0 L800.5 513.7 L796.1 524.8 L789.4 529.3 L782.7 536.0 L778.2 540.4 L774.9 537.1 L778.2 529.3 L773.7 520.4 L768.2 515.9 L760.4 511.4 L755.9 509.2Z"/>
<path fill="#52a652" d="M844.3 424.7 L852.5 419.5 L857.0 421.0 L860.7 424.0 L859.2 429.9 L860.0 434.4 L854.8 435.9 L848.8 434.4 L847.3 428.5Z M861.5 434.4 L863.0 434.4 L863.0 437.1 L861.5 437.1Z"/>
<path fill="#f4eed2" d="M859.1 412.9 L867.1 411.1 L868.0 417.3 L867.1 424.5 L860.9 425.4 L860.0 420.9Z"/>
<path fill="#109618" d="M887.8 369.2 L893.4 368.1 L900.1 372.6 L904.5 377.0 L902.3 381.5 L897.8 383.7 L895.6 379.2 L896.7 385.9 L901.2 384.8 L909.0 378.1 L913.5 374.8 L920.2 372.6 L928.0 368.1 L933.5 365.9 L938.0 368.1 L936.9 356.9 L940.2 353.6 L943.6 354.7 L944.7 363.6 L945.8 378.1 L948.0 363.6 L953.6 354.7 L957.0 352.5 L962.6 348.0 L964.8 342.4 L973.7 338.0 L982.6 334.6 L987.1 331.3 L991.6 334.6 L997.1 338.0 L999.4 344.7 L996.0 349.1 L991.6 351.4 L1000.5 351.4 L1009.4 352.5 L1016.1 351.4 L1019.0 354.7 L1021.2 361.4 L1032.4 356.9 L1041.3 356.9 L1048.0 361.4 L1059.2 363.6 L1063.6 368.1 L1072.6 368.1 L1081.5 370.3 L1086.7 370.5 L1095.0 377.3 L1094.5 386.7 L1088.8 383.5 L1084.6 386.7 L1085.6 391.9 L1078.3 394.0 L1072.1 398.1 L1065.8 400.2 L1063.8 404.4 L1061.7 411.7 L1055.4 420.0 L1053.3 417.9 L1054.4 405.4 L1059.6 399.2 L1062.5 395.5 L1059.6 395.0 L1056.5 394.0 L1053.3 399.2 L1047.1 401.3 L1036.7 401.3 L1028.3 409.6 L1033.5 412.7 L1035.6 419.0 L1034.6 424.2 L1028.3 430.4 L1022.1 434.6 L1021.2 428.3 L1023.5 417.2 L1014.5 417.2 L1003.4 421.6 L1004.9 421.6 L996.0 423.9 L982.6 419.4 L973.7 417.2 L964.8 421.6 L955.9 418.3 L946.9 412.7 L938.0 410.5 L929.1 419.4 L917.9 419.4 L913.5 423.9 L914.6 432.8 L909.0 435.0 L900.1 430.6 L897.8 426.1 L902.3 421.6 L893.4 414.9 L886.7 403.8 L885.6 394.9 L888.9 385.9 L887.8 377.0Z M917.5 367.0 L918.4 356.9 L922.4 346.9 L930.2 338.0 L938.5 334.6 L941.4 337.3 L935.8 343.5 L929.5 351.4 L925.7 360.3 L926.4 367.0 L930.2 370.3 L922.4 370.3Z M876.3 410.6 L880.1 410.6 L879.8 412.6 L876.3 412.6Z M969.2 312.3 L974.8 305.2 L979.3 309.0 L981.5 319.0 L975.9 323.5 L970.4 317.9Z M980.4 320.1 L986.0 319.0 L990.4 327.9 L983.7 329.0Z M1027.9 340.0 L1033.0 338.5 L1040.0 341.0 L1048.0 343.5 L1046.0 346.0 L1038.0 345.0 L1030.0 344.0Z M1032.4 348.0 L1036.0 348.5 L1038.0 354.7 L1034.0 353.5Z M1084.1 362.5 L1088.6 361.4 L1089.7 363.6 L1084.8 364.1Z M1035.6 411.7 L1037.5 412.5 L1039.5 423.0 L1037.2 428.3 L1036.0 420.0Z M909.0 310.1 L913.5 307.4 L917.5 309.0 L916.8 313.4 L911.2 314.1Z M918.4 305.6 L924.6 302.3 L928.0 306.7 L926.9 313.4 L921.3 315.0 L918.4 311.2Z M928.0 306.1 L933.5 304.5 L935.3 309.0 L930.2 311.2Z M902.3 374.8 L906.8 372.1 L911.2 374.3 L907.9 378.1Z M613.2 371.3 L616.2 372.7 L619.9 377.2 L624.3 378.7 L627.3 380.9 L624.3 383.2 L622.9 386.1 L619.9 383.2 L616.9 382.4 L613.2 383.9Z M613.2 361.0 L616.5 360.8 L617.6 363.2 L614.0 363.8Z"/>
<rect x="446.6" y="559.8" width="15.8" height="12" fill="#f4eed2"/>
<rect x="462.1" y="559.8" width="4.4" height="12" fill="#d8dcd0"/>
<rect x="466.2" y="559.8" width="14.4" height="12" fill="#d5d5d5"/>
<rect x="480.3" y="559.8" width="16.2" height="12" fill="#c3d5b6"/>
<rect x="496.2" y="559.8" width="22.8" height="12" fill="#b0cca2"/>
<rect x="518.7" y="559.8" width="12.4" height="12" fill="#a3c796"/>
<rect x="530.8" y="559.8" width="26.5" height="12" fill="#95c389"/>
<rect x="557.0" y="559.8" width="6.9" height="12" fill="#86bb7a"/>
<rect x="563.6" y="559.8" width="32.1" height="12" fill="#6ab06a"/>
<rect x="595.4" y="559.8" width="35.9" height="12" fill="#52a652"/>
<rect x="631.0" y="559.8" width="21.8" height="12" fill="#38a038"/>
<rect x="652.5" y="559.8" width="12.5" height="12" fill="#2a9b2a"/>
<rect x="664.7" y="559.8" width="16.6" height="12" fill="#13961b"/>
</svg>
<div class="t" style="left:418px;top:559px;font-size:13px;color:#222">200</div>
<div class="t" style="left:689px;top:559px;font-size:13px;color:#222">700</div>

<div class="abs" style="left:101px;top:641px;width:275px;height:40px;background:#fe6574;border-radius:2px"></div>
<div class="abs" style="left:406px;top:641px;width:276px;height:40px;background:#7b5aa5;border-radius:2px"></div>
<div class="abs" style="left:712px;top:641px;width:275px;height:40px;background:#56d5bd;border-radius:2px"></div>
<div class="abs" style="left:1017px;top:641px;width:276px;height:40px;background:#f9bf5f;border-radius:2px"></div>
<div class="abs" style="left:1331px;top:72px;width:3px;height:180px;background:#d4d4d4;border-radius:0 0 2px 2px"></div>
</body></html>
